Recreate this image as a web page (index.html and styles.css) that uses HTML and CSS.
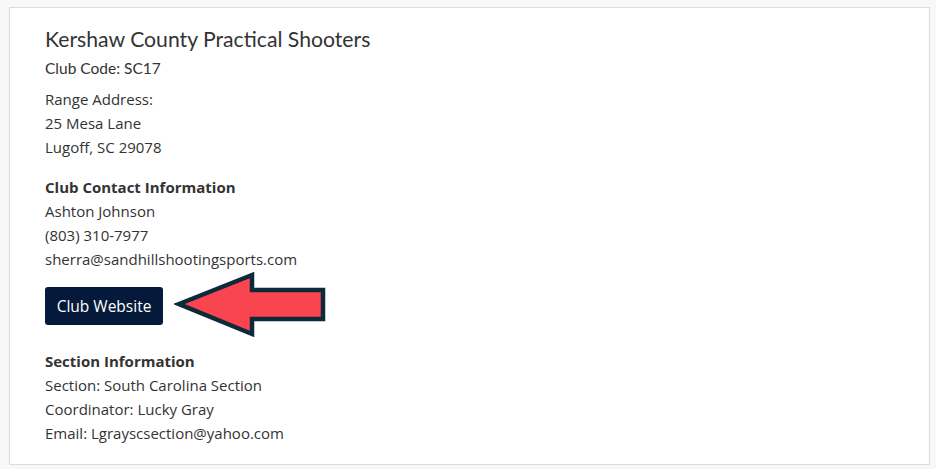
FILE: index.html
```html
<!DOCTYPE html>
<html>
<head>
<meta charset="utf-8">
<link rel="stylesheet" href="styles.css">
</head>
<body>
<div class="card">
  <h2 class="title">Kershaw County Practical Shooters</h2>
  <p class="code">Club Code: SC17</p>
  <div class="block addr">
    <div>Range Address:</div>
    <div>25 Mesa Lane</div>
    <div>Lugoff, SC 29078</div>
  </div>
  <div class="block contact">
    <div class="bold">Club Contact Information</div>
    <div>Ashton Johnson</div>
    <div>(803) 310-7977</div>
    <div>sherra@sandhillshootingsports.com</div>
  </div>
  <div class="btnrow">
    <a class="btn">Club Website</a>
    <svg class="arrow" width="154" height="70" viewBox="0 0 154 70">
      <polygon points="5,34 78,5 78,20 149,20 149,49 78,49 78,64" fill="#f8454f" stroke="#0c2a3a" stroke-width="4.5" stroke-linejoin="miter"/>
    </svg>
  </div>
  <div class="block section">
    <div class="bold">Section Information</div>
    <div>Section: South Carolina Section</div>
    <div>Coordinator: Lucky Gray</div>
    <div>Email: Lgrayscsection@yahoo.com</div>
  </div>
</div>
</body>
</html>
```
FILE: styles.css
```css
html, body { margin: 0; padding: 0; }
body {
  background: #f8f8f8;
  font-family: "Open Sans", Lato, sans-serif;
  color: #333;
  padding: 7px 6px 0 9px;
}
.card {
  background: #fff;
  border: 1px solid #dcdcdc;
  box-sizing: border-box;
  width: 921px;
  height: 458px;
  padding: 19px 0 0 35px;
}
.title {
  margin: 0;
  font-family: Lato, sans-serif;
  font-weight: 400;
  font-size: 21.2px;
  line-height: 24px;
  color: #333;
}
.code {
  margin: 5px 0 0;
  font-family: Lato, sans-serif;
  font-size: 15.5px;
  line-height: 24px;
}
.block {
  font-size: 15px;
  line-height: 24px;
}
.addr { margin-top: 7px; }
.contact { margin-top: 16px; }
.bold { font-weight: 700; }
.btnrow {
  display: flex;
  align-items: center;
  margin-top: 16px;
  height: 38px;
}
.btn {
  display: inline-flex;
  align-items: center;
  justify-content: center;
  background: #05193a;
  color: #fff;
  font-size: 15.5px;
  width: 118px;
  height: 38px;
  border-radius: 3px;
}
.arrow {
  margin-left: 11px;
  margin-top: -2px;
  flex: none;
}
.section { margin-top: 24px; }
```
